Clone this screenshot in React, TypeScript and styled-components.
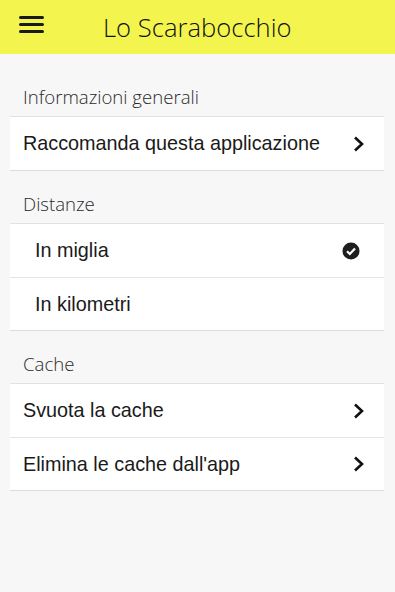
import styled, { createGlobalStyle } from "styled-components";

const GlobalStyle = createGlobalStyle`
  html, body {
    margin: 0;
    padding: 0;
    background: #f7f7f7;
  }
  body {
    font-family: "Liberation Sans", Arial, sans-serif;
  }
`;

const sections = [
  {
    title: "Informazioni generali",
    rows: [{ label: "Raccomanda questa applicazione", kind: "chevron" }],
    indent: false,
  },
  {
    title: "Distanze",
    rows: [
      { label: "In miglia", kind: "check" },
      { label: "In kilometri", kind: "none" },
    ],
    indent: true,
  },
  {
    title: "Cache",
    rows: [
      { label: "Svuota la cache", kind: "chevron" },
      { label: "Elimina le cache dall'app", kind: "chevron" },
    ],
    indent: false,
  },
];

function App() {
  return (
    <Page>
      <GlobalStyle />
      <Header>
        <MenuButton aria-label="menu">
          <span />
          <span />
          <span />
        </MenuButton>
        <Title>Lo Scarabocchio</Title>
      </Header>
      <Content>
        {sections.map((s) => (
          <Section key={s.title}>
            <SectionTitle>{s.title}</SectionTitle>
            <Card>
              {s.rows.map((r) => (
                <Row key={r.label} $indent={s.indent}>
                  <RowLabel>{r.label}</RowLabel>
                  {r.kind === "chevron" && (
                    <svg width="14" height="18" viewBox="0 0 14 18">
                      <path d="M3 2.5 L10 9 L3 15.5" fill="none" stroke="#111" strokeWidth="2.6" />
                    </svg>
                  )}
                  {r.kind === "check" && (
                    <CheckIcon width="18" height="18" viewBox="0 0 18 18">
                      <circle cx="9" cy="9" r="8.5" fill="#1e1e1e" />
                      <path d="M5 9.3 L7.8 12 L13 6.4" fill="none" stroke="#fff" strokeWidth="2.2" />
                    </CheckIcon>
                  )}
                </Row>
              ))}
            </Card>
          </Section>
        ))}
      </Content>
    </Page>
  );
}

export default App;

const Page = styled.div`
  width: 395px;
  min-height: 592px;
  background: #f7f7f7;
`;

const Header = styled.header`
  height: 54px;
  background: #f3f54e;
  display: flex;
  align-items: center;
  padding-left: 19px;
  box-sizing: border-box;
`;

const MenuButton = styled.div`
  width: 25px;
  display: flex;
  flex-direction: column;
  gap: 4px;
  margin-top: -5px;

  span {
    display: block;
    height: 3px;
    border-radius: 2px;
    background: #1a1a1a;
  }
`;

const Title = styled.h1`
  margin: 0 0 0 59px;
  font-family: "Open Sans", sans-serif;
  font-weight: 300;
  font-size: 25.6px;
  color: #111;
`;

const Content = styled.main`
  padding: 26px 11px 0 10px;
  display: flex;
  flex-direction: column;
  gap: 16px;
`;

const Section = styled.section`
  display: flex;
  flex-direction: column;
`;

const SectionTitle = styled.div`
  font-family: "Open Sans", sans-serif;
  font-weight: 300;
  font-size: 18.6px;
  line-height: 34px;
  height: 36px;
  color: #2a2a2a;
  padding: 0 0 0 13px;
`;

const Card = styled.div`
  background: #fff;
  border-top: 1px solid #e2e2e2;
  border-bottom: 1px solid #dcdcdc;
`;

const Row = styled.div<{ $indent: boolean }>`
  height: 53px;
  display: flex;
  align-items: center;
  justify-content: space-between;
  padding: 0 18px 0 ${(p) => (p.$indent ? 25 : 13)}px;
  box-sizing: border-box;

  & + & {
    border-top: 1px solid #e4e4e4;
  }
`;

const RowLabel = styled.span`
  font-size: 19.8px;
  color: #1a1a1a;
`;

const CheckIcon = styled.svg`
  margin-right: 6px;
`;
